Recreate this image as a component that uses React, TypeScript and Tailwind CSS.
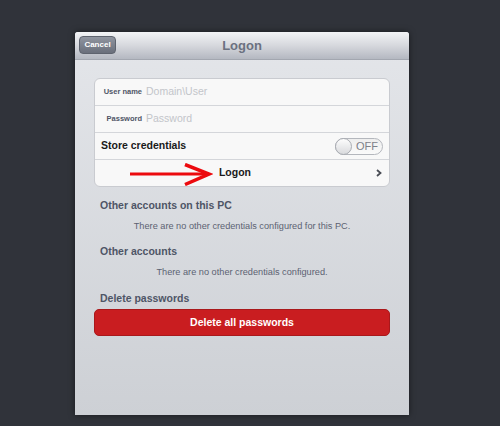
import React from "react";

const font = { fontFamily: '"Liberation Sans", Arial, sans-serif' };

function Toggle() {
  return (
    <div className="flex h-[17px] w-[48px] items-center rounded-full border border-[#b4b7bd] bg-gradient-to-b from-[#eeeeee] to-[#fafafa]">
      <div className="h-[17px] w-[17px] -ml-px rounded-full border border-[#a9acb2] bg-gradient-to-b from-[#fdfdfd] to-[#d9dadd]" />
      <span className="flex-1 text-center text-[11px] text-[#7d8089]">OFF</span>
    </div>
  );
}

function Arrow() {
  return (
    <svg className="absolute left-[34px] top-[3px]" width="84" height="24" viewBox="0 0 84 24">
      <line x1="1" y1="11" x2="78" y2="11" stroke="#ec0a0e" strokeWidth="3.2" />
      <polyline points="56,1.5 80,11 56,21.5" fill="none" stroke="#ec0a0e" strokeWidth="3.5" />
    </svg>
  );
}

export default function App() {
  return (
    <div className="h-[426px] w-[500px] overflow-hidden bg-[#30333a] pl-[75px] pt-[32px]" style={font}>
      <div className="flex h-[383px] w-[334px] flex-col overflow-hidden rounded-t-[3px] bg-gradient-to-b from-[#e4e6ea] to-[#cdd0d5] shadow-[0_0_6px_rgba(0,0,0,0.5)]">
        <div className="relative flex h-[28px] items-center justify-center border-b border-[#a3a7b0] bg-gradient-to-b from-[#f3f4f6] via-[#d6d8dd] to-[#b4b8c1]">
          <div className="absolute left-[4px] top-[4px] flex h-[18px] w-[37px] items-center justify-center rounded-[4px] border border-[#5e636e] bg-gradient-to-b from-[#9095a0] to-[#6a6f7b] text-[8px] font-bold text-white">
            Cancel
          </div>
          <span className="text-[13px] font-bold text-[#6b7180]">Logon</span>
        </div>

        <div className="flex flex-col px-[19px] pt-[18px]">
          <div className="flex flex-col overflow-hidden rounded-[6px] border border-[#c9cbd0] bg-[#f8f8f8]">
            <div className="flex h-[27px] items-center border-b border-[#d4d6da]">
              <span className="w-[47px] whitespace-nowrap text-right text-[7.5px] font-bold text-[#4f5566]">User name</span>
              <span className="ml-[4px] text-[10.5px] text-[#c3c5ca]">Domain\User</span>
            </div>
            <div className="flex h-[27px] items-center border-b border-[#d4d6da]">
              <span className="w-[47px] whitespace-nowrap text-right text-[7.5px] font-bold text-[#4f5566]">Password</span>
              <span className="ml-[4px] text-[10.5px] text-[#c3c5ca]">Password</span>
            </div>
            <div className="flex h-[27px] items-center justify-between border-b border-[#d4d6da] pl-[6px] pr-[6px]">
              <span className="text-[10.5px] font-bold text-[#1a1a1a]">Store credentials</span>
              <Toggle />
            </div>
            <div className="relative flex h-[26px] items-center justify-center pr-[14px]">
              <Arrow />
              <span className="text-[10.5px] font-bold text-[#1a1a1a]">Logon</span>
              <svg className="absolute right-[7px] top-[9px]" width="6" height="8" viewBox="0 0 6 8">
                <polyline points="1,1 4.5,4 1,7" fill="none" stroke="#4a4d55" strokeWidth="1.8" />
              </svg>
            </div>
          </div>

          <div className="mt-[11px] h-[14px] pl-[6px] text-[10.5px] font-bold leading-[14px] text-[#4e5566]">Other accounts on this PC</div>
          <div className="mt-[7px] h-[14px] text-center text-[9.2px] leading-[14px] text-[#5c6272]">
            There are no other credentials configured for this PC.
          </div>
          <div className="mt-[11px] h-[14px] pl-[6px] text-[10.5px] font-bold leading-[14px] text-[#4e5566]">Other accounts</div>
          <div className="mt-[7px] h-[14px] text-center text-[9.2px] leading-[14px] text-[#5c6272]">
            There are no other credentials configured.
          </div>
          <div className="mt-[12px] h-[14px] pl-[6px] text-[10.5px] font-bold leading-[14px] text-[#4e5566]">Delete passwords</div>
          <div className="mt-[4px] flex h-[27px] items-center justify-center rounded-[5px] border border-[#a9181b] bg-[#c91d20] text-[10.5px] font-bold text-white">
            Delete all passwords
          </div>
        </div>
      </div>
    </div>
  );
}
